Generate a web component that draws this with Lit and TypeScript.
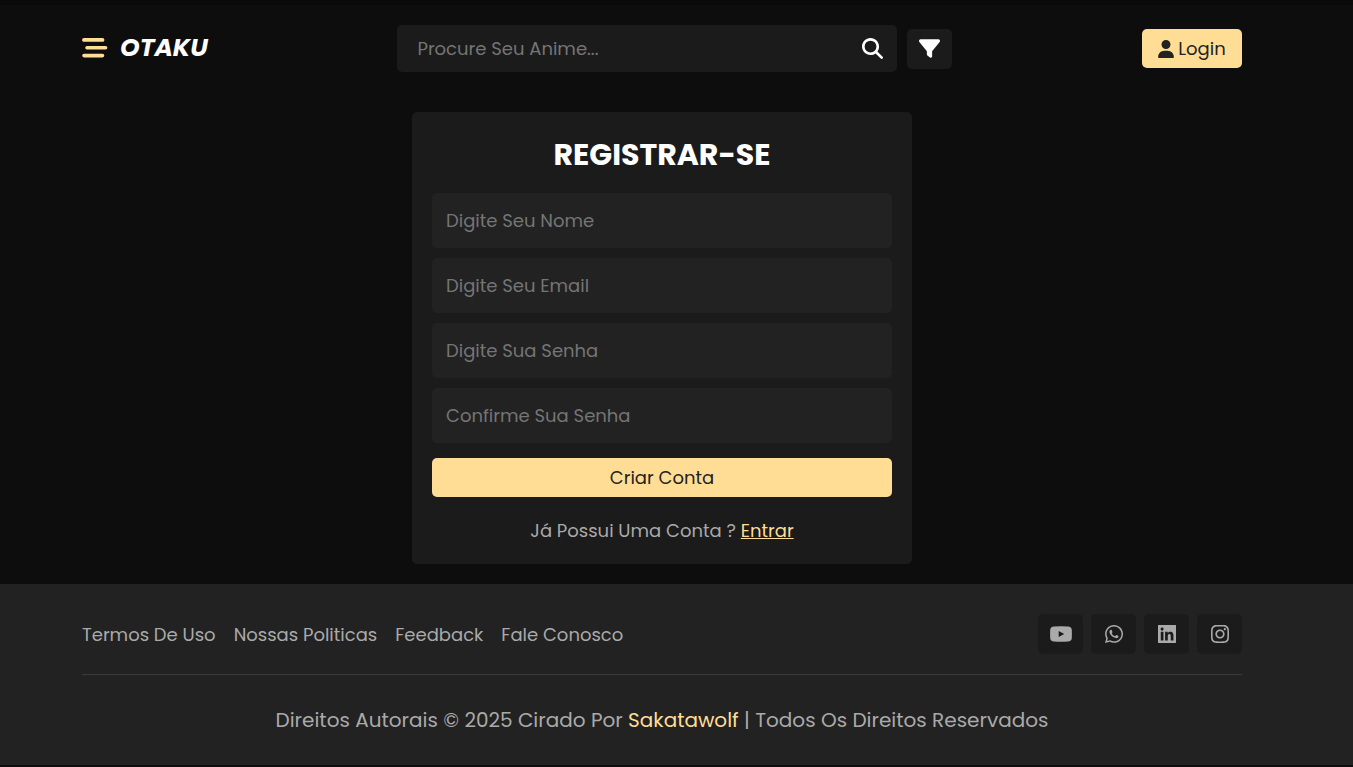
import { LitElement, html, css, svg } from "lit";
import { customElement } from "lit/decorators.js";

const ICONS = {
  menu: {
    box: "0 0 26 20",
    d: "M2 0H20.5a1.9 1.9 0 0 1 0 3.8H2a1.9 1.9 0 0 1 0-3.8zM5 8H23.6a1.8 1.8 0 0 1 0 3.6H5a1.8 1.8 0 0 1 0-3.6zM2 15.8H20.5a1.8 1.8 0 0 1 0 3.6H2a1.8 1.8 0 0 1 0-3.6z",
  },
  search: {
    box: "0 0 512 512",
    d: "M416 208c0 45.9-14.9 88.3-40 122.7L502.6 457.4c12.5 12.5 12.5 32.8 0 45.3s-32.8 12.5-45.3 0L330.7 376c-34.4 25.2-76.8 40-122.7 40C93.1 416 0 322.9 0 208S93.1 0 208 0S416 93.1 416 208zM208 352a144 144 0 1 0 0-288 144 144 0 1 0 0 288z",
  },
  filter: {
    box: "0 0 512 512",
    d: "M3.9 54.9C10.5 40.9 24.5 32 40 32H472c15.5 0 29.5 8.9 36.1 22.9s4.6 30.5-5.2 42.5L320 320.9V448c0 12.1-6.8 23.2-17.7 28.6s-23.8 4.3-33.5-3l-64-48c-8.1-6-12.8-15.5-12.8-25.6V320.9L9 97.3C-.7 85.4-2.8 68.8 3.9 54.9z",
  },
  user: {
    box: "0 0 448 512",
    d: "M224 256A128 128 0 1 0 224 0a128 128 0 1 0 0 256zm-45.7 48C79.8 304 0 383.8 0 482.3C0 498.7 13.3 512 29.7 512H418.3c16.4 0 29.7-13.3 29.7-29.7C448 383.8 368.2 304 269.7 304H178.3z",
  },
  youtube: {
    box: "0 0 22 16",
    d: "M4 .5Q11 0 18 .5Q21.6 .8 21.8 4Q22 8 21.8 12Q21.6 15.2 18 15.5Q11 16 4 15.5Q.4 15.2 .2 12Q0 8 .2 4Q.4 .8 4 .5zM8.7 4.9V11.1L14.2 8z",
  },
  whatsapp: {
    box: "0 32 448 448",
    d: "M380.9 97.1C339 55.1 283.2 32 223.9 32c-122.4 0-222 99.6-222 222 0 39.1 10.2 77.3 29.6 111L0 480l117.7-30.9c32.4 17.7 68.9 27 106.1 27h.1c122.3 0 224.1-99.6 224.1-222 0-59.3-25.2-115-67.1-157zm-157 341.6c-33.2 0-65.7-8.9-94-25.7l-6.7-4-69.8 18.3L72 359.2l-4.4-7c-18.5-29.4-28.2-63.3-28.2-98.2 0-101.7 82.8-184.5 184.6-184.5 49.3 0 95.6 19.2 130.4 54.1 34.8 34.9 56.2 81.2 56.1 130.5 0 101.8-84.9 184.6-186.6 184.6zm101.2-138.2c-5.5-2.8-32.8-16.2-37.9-18-5.1-1.9-8.8-2.8-12.5 2.8-3.7 5.6-14.3 18-17.6 21.8-3.2 3.7-6.5 4.2-12 1.4-32.6-16.3-54-29.1-75.5-66-5.7-9.8 5.7-9.1 16.3-30.3 1.8-3.7.9-6.9-.5-9.7-1.4-2.8-12.5-30.1-17.1-41.2-4.5-10.8-9.1-9.3-12.5-9.5-3.2-.2-6.9-.2-10.6-.2-3.7 0-9.7 1.4-14.8 6.9-5.1 5.6-19.4 19-19.4 46.3 0 27.3 19.9 53.7 22.6 57.4 2.8 3.7 39.1 59.7 94.8 83.8 35.2 15.2 49 16.5 66.6 13.9 10.7-1.6 32.8-13.4 37.4-26.4 4.6-13 4.6-24.1 3.2-26.4-1.3-2.5-5-3.9-10.5-6.6z",
  },
  linkedin: {
    box: "0 32 448 448",
    d: "M436 32H12C4 32 0 36 0 44V468C0 476 4 480 12 480H436C444 480 448 476 448 468V44C448 36 444 32 436 32zM135.4 416H69V202.2h66.5V416zm-33.2-243c-21.3 0-38.5-17.3-38.5-38.5S80.9 96 102.2 96c21.2 0 38.5 17.3 38.5 38.5 0 21.3-17.2 38.5-38.5 38.5zm282.1 243h-66.4V312c0-24.8-.5-56.7-34.5-56.7-34.6 0-39.9 27-39.9 54.9V416h-66.4V202.2h63.7v29.2h.9c8.9-16.8 30.6-34.5 62.9-34.5 67.2 0 79.7 44.3 79.7 101.9V416z",
  },
  instagram: {
    box: "0 32 448 448",
    d: "M224.1 141c-63.6 0-114.9 51.3-114.9 114.9s51.3 114.9 114.9 114.9S339 319.5 339 255.9 287.7 141 224.1 141zm0 189.6c-41.1 0-74.7-33.5-74.7-74.7s33.5-74.7 74.7-74.7 74.7 33.5 74.7 74.7-33.6 74.7-74.7 74.7zm146.4-194.3c0 14.9-12 26.8-26.8 26.8-14.9 0-26.8-12-26.8-26.8s12-26.8 26.8-26.8 26.8 12 26.8 26.8zm76.1 27.2c-1.7-35.9-9.9-67.7-36.2-93.9-26.2-26.2-58-34.4-93.9-36.2-37-2.1-147.9-2.1-184.9 0-35.8 1.7-67.6 9.9-93.9 36.1s-34.4 58-36.2 93.9c-2.1 37-2.1 147.9 0 184.9 1.7 35.9 9.9 67.7 36.2 93.9s58 34.4 93.9 36.2c37 2.1 147.9 2.1 184.9 0 35.9-1.7 67.7-9.9 93.9-36.2 26.2-26.2 34.4-58 36.2-93.9 2.1-37 2.1-147.8 0-184.8zM398.8 388c-7.8 19.6-22.9 34.7-42.6 42.6-29.5 11.7-99.5 9-132.1 9s-102.7 2.6-132.1-9c-19.6-7.8-34.7-22.9-42.6-42.6-11.7-29.5-9-99.5-9-132.1s-2.6-102.7 9-132.1c7.8-19.6 22.9-34.7 42.6-42.6 29.5-11.7 99.5-9 132.1-9s102.7-2.6 132.1 9c19.6 7.8 34.7 22.9 42.6 42.6 11.7 29.5 9 99.5 9 132.1s2.7 102.7-9 132.1z",
  },
};

type IconName = keyof typeof ICONS;

const icon = (name: IconName) => html`
  <svg class="icon ${name}" viewBox=${ICONS[name].box} aria-hidden="true">
    ${svg`<path fill="currentColor" fill-rule="evenodd" d=${ICONS[name].d}></path>`}
  </svg>`;

const FIELDS = [
  { id: "nome", type: "text", label: "Digite Seu Nome" },
  { id: "email", type: "email", label: "Digite Seu Email" },
  { id: "senha", type: "password", label: "Digite Sua Senha" },
  { id: "confirma", type: "password", label: "Confirme Sua Senha" },
];

const LINKS = ["Termos De Uso", "Nossas Politicas", "Feedback", "Fale Conosco"];

const SOCIAL: { icon: IconName; label: string }[] = [
  { icon: "youtube", label: "YouTube" },
  { icon: "whatsapp", label: "WhatsApp" },
  { icon: "linkedin", label: "LinkedIn" },
  { icon: "instagram", label: "Instagram" },
];

@customElement("app-root")
export class AppRoot extends LitElement {
  static styles = css`
    :host {
      --accent: #ffdd95;
      --page: #0d0d0d;
      --card: #1b1b1b;
      --field: #222222;
      --muted: #aaaaaa;
      display: block;
      box-sizing: border-box;
      min-height: 100vh;
      border-top: 5px solid #0a0a0a;
      background: var(--page);
      color: var(--muted);
      font-family: Poppins, Inter, sans-serif;
      font-size: 18px;
      line-height: 27px;
    }
    * {
      box-sizing: border-box;
      margin: 0;
    }
    a {
      color: inherit;
      text-decoration: none;
    }
    button,
    input {
      border: 0;
      border-radius: 5px;
      font: inherit;
      outline: 0;
    }
    button {
      padding: 0;
      background: none;
      color: inherit;
      cursor: pointer;
    }
    input::placeholder {
      color: #757575;
      opacity: 1;
    }
    .icon {
      display: block;
      flex: none;
    }
    .page {
      padding-right: 29px;
    }
    .container {
      width: 100%;
      max-width: 1160px;
      margin: 0 auto;
    }
    .header {
      display: flex;
      align-items: center;
      justify-content: space-between;
      padding: 20px 0 40px;
    }
    .brand {
      display: flex;
      align-items: center;
      gap: 12px;
      padding-bottom: 2px;
    }
    .menu-button {
      color: var(--accent);
    }
    .menu {
      width: 26px;
      height: 20px;
    }
    .logo {
      color: #ffffff;
      font-size: 25px;
      font-style: italic;
      font-weight: 700;
    }
    .tools {
      display: flex;
      align-items: center;
      gap: 10px;
    }
    .search-box {
      display: flex;
      align-items: center;
      width: 500px;
      height: 47px;
      padding: 0 14px 0 20px;
      border-radius: 5px;
      background: var(--card);
      color: #ffffff;
    }
    .search-input {
      flex: 1;
      min-width: 0;
      padding: 0;
      background: transparent;
      color: #ffffff;
    }
    .search {
      width: 21px;
      height: 21px;
    }
    .square {
      display: flex;
      align-items: center;
      justify-content: center;
      width: 45px;
      height: 40px;
      border-radius: 5px;
      background: var(--card);
    }
    .filter-button {
      color: #ffffff;
    }
    .filter {
      width: 21px;
      height: 21px;
    }
    .login {
      display: flex;
      align-items: center;
      justify-content: center;
      gap: 4px;
      width: 100px;
      height: 39px;
      border-radius: 5px;
      background: var(--accent);
      color: #222222;
    }
    .user {
      width: 16px;
      height: 18px;
    }
    .register {
      display: flex;
      flex-direction: column;
      gap: 10px;
      width: 100%;
      max-width: 500px;
      margin: 0 auto 20px;
      padding: 20px;
      border-radius: 5px;
      background: var(--card);
    }
    .title {
      margin-bottom: 6px;
      color: #ffffff;
      font-size: 30px;
      font-weight: 700;
      line-height: 45px;
      text-align: center;
    }
    .field {
      width: 100%;
      height: 55px;
      padding: 0 14px;
      background: var(--field);
      color: #ffffff;
    }
    .submit {
      height: 39px;
      margin-top: 5px;
      background: var(--accent);
      color: #222222;
    }
    .switch {
      margin-top: 10px;
      text-align: center;
    }
    .enter {
      color: var(--accent);
      text-decoration: underline;
    }
    .footer {
      padding: 30px 29px 0 0;
      background: var(--field);
    }
    .footer-row {
      display: flex;
      align-items: center;
      justify-content: space-between;
      padding-bottom: 20px;
      border-bottom: 1px solid #3a3a3a;
    }
    .links {
      display: flex;
      gap: 18px;
    }
    .social {
      display: flex;
      gap: 8px;
    }
    .youtube {
      width: 22px;
      height: 16px;
    }
    .whatsapp,
    .linkedin,
    .instagram {
      width: 18px;
      height: 18px;
    }
    .copyright {
      padding: 30px 0;
      font-size: 20px;
      line-height: 30px;
      text-align: center;
    }
    .author {
      color: var(--accent);
    }
  `;

  render() {
    return html`
      <div class="page">
        <header class="header container">
          <div class="brand">
            <button class="menu-button" type="button" aria-label="Menu">${icon("menu")}</button>
            <a class="logo" href="#">OTAKU</a>
          </div>
          <div class="tools">
            <form class="search-box" role="search">
              <input class="search-input" type="text" aria-label="Procure Seu Anime" placeholder="Procure Seu Anime..." />
              <button type="button" aria-label="Buscar">${icon("search")}</button>
            </form>
            <button class="square filter-button" type="button" aria-label="Filtrar">${icon("filter")}</button>
          </div>
          <a class="login" href="#">${icon("user")}<span>Login</span></a>
        </header>
        <main class="container">
          <form class="register">
            <h1 class="title">REGISTRAR-SE</h1>
            ${FIELDS.map(
              (f) => html`<input class="field" id=${f.id} type=${f.type} aria-label=${f.label} placeholder=${f.label} />`
            )}
            <button class="submit" type="button">Criar Conta</button>
            <p class="switch">Já Possui Uma Conta ? <a class="enter" href="#">Entrar</a></p>
          </form>
        </main>
      </div>
      <footer class="footer">
        <div class="container">
          <div class="footer-row">
            <nav class="links">${LINKS.map((l) => html`<a href="#">${l}</a>`)}</nav>
            <div class="social">
              ${SOCIAL.map((s) => html`<a class="square" href="#" aria-label=${s.label}>${icon(s.icon)}</a>`)}
            </div>
          </div>
          <p class="copyright">
            Direitos Autorais © 2025 Cirado Por <a class="author" href="#">Sakatawolf</a> | Todos Os Direitos Reservados
          </p>
        </div>
      </footer>
    `;
  }
}
